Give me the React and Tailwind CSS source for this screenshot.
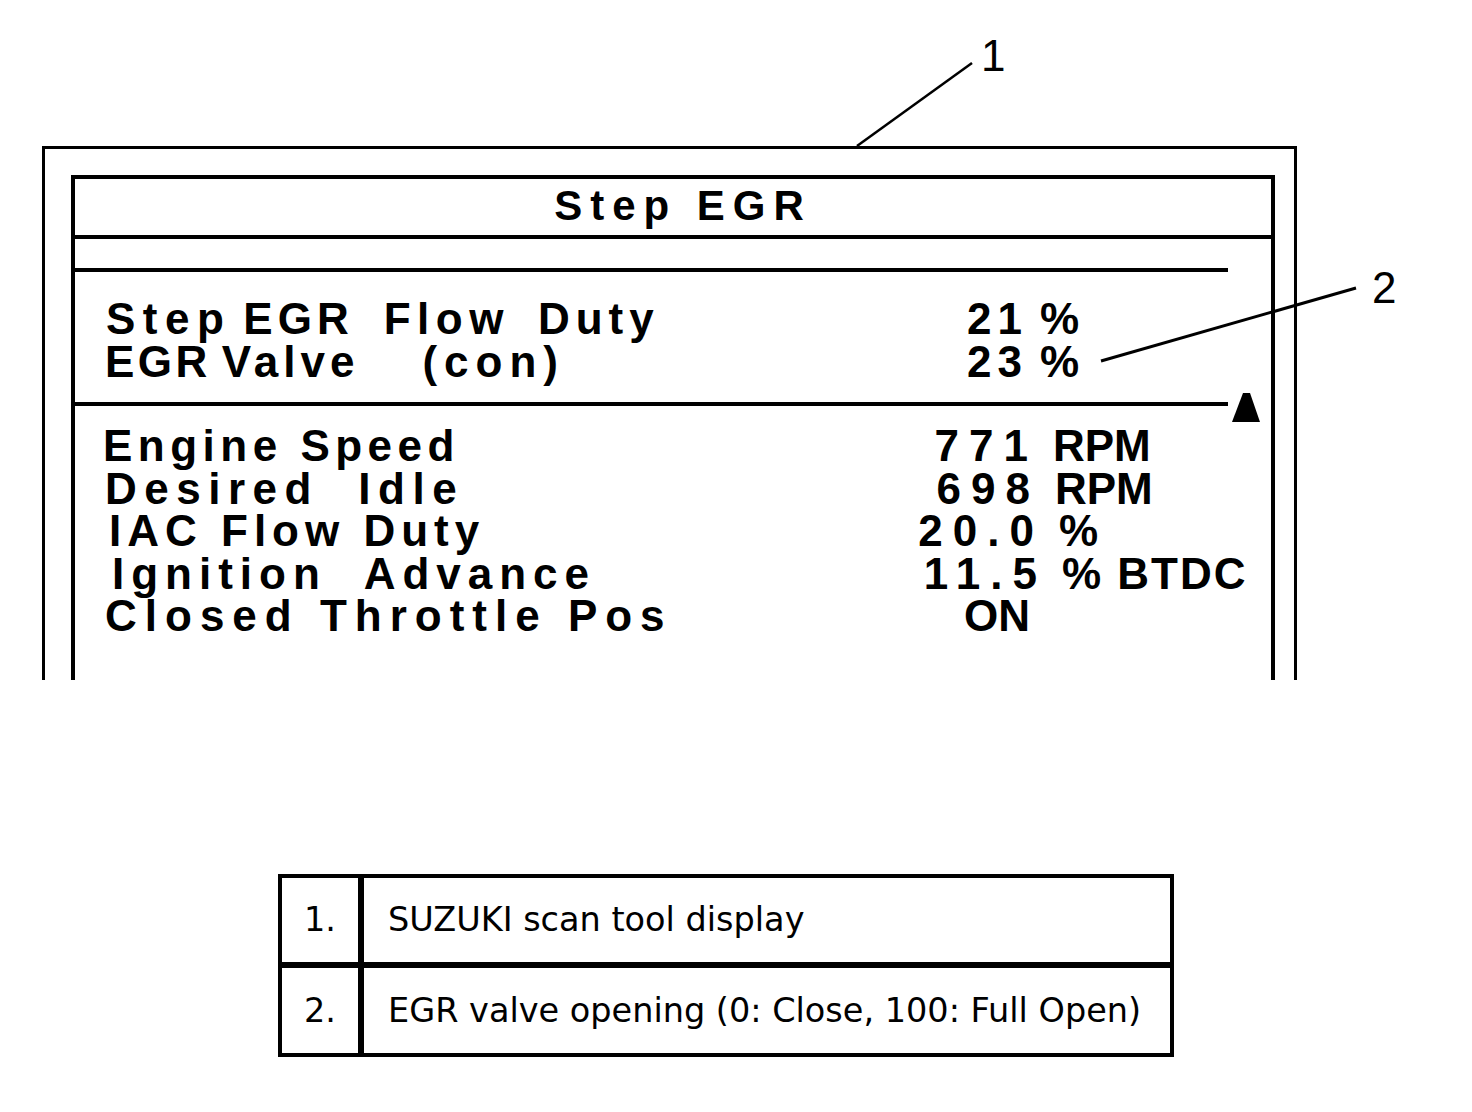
import React from "react";

function Row({ label, num, unit, lcls, ncls, ucls, top }) {
  return (
    <div className="flex whitespace-pre">
      <div className={`shrink-0 w-[795px] flex ${lcls}`}>{label}</div>
      <div className={`shrink-0 text-right ${top ? "w-[128px]" : "w-[140px]"} ${ncls}`}>{num}</div>
      <div className={`${top ? "ml-[12px]" : "ml-[15px]"} ${ucls}`}>{unit}</div>
    </div>
  );
}

export default function App() {
  return (
    <div className="relative w-[1472px] h-[1112px] bg-white overflow-hidden font-['Liberation_Sans',Arial,sans-serif] text-black">
      <div className="flex flex-col">
        <div className="ml-[42px] mt-[146px] w-[1255px] h-[534px] border-[3px] border-b-0 border-black pt-[26px] pl-[26px] pr-[19px] flex flex-col">
          <div className="flex-1 border-[4px] border-b-0 border-black flex flex-col">
            <div className="h-[60px] shrink-0 border-b-[4px] border-black flex items-center justify-center pl-[20px] pb-[3px]">
              <span className="text-[42px] leading-[42px] font-bold tracking-[8px]">Step EGR</span>
            </div>
            <div className="mt-[29px] h-[4px] w-[1153px] bg-black shrink-0" />
            <div className="mt-[25px] pl-[30px] font-bold text-[44px] leading-[43px]">
              <Row
                top
                label={
                  <>
                    <span className="ml-[1px] tracking-[7.5px]">Step</span>
                    <span className="ml-[12px] tracking-[5px]">EGR</span>
                    <span className="ml-[30px] tracking-[6.5px]">Flow</span>
                    <span className="ml-[28px] tracking-[6px]">Duty</span>
                  </>
                }
                lcls=""
                num="21"
                ncls="tracking-[6px]"
                unit="%"
                ucls=""
              />
              <Row
                top
                label={
                  <>
                    <span className="tracking-[3.5px]">EGR</span>
                    <span className="ml-[11px] tracking-[5px]">Valve</span>
                    <span className="ml-[63px] tracking-[7px]">(con)</span>
                  </>
                }
                lcls=""
                num="23"
                ncls="tracking-[6px]"
                unit="%"
                ucls=""
              />
            </div>
            <div className="mt-[10px] h-[29px] flex items-start shrink-0">
              <div className="mt-[9px] h-[4px] w-[1153px] bg-black" />
              <svg className="ml-[4px]" width="28" height="29" viewBox="0 0 28 29">
                <polygon points="11,0 18,0 28,29 0,29" fill="#000" />
              </svg>
            </div>
            <div className="mt-[3px] pl-[30px] font-bold text-[44px] leading-[42.5px]">
              <Row label="Engine Speed" lcls="tracking-[5.5px] -ml-[2px]" num="771" ncls="tracking-[10px]" unit="RPM" ucls="" />
              <Row label="Desired  Idle" lcls="tracking-[7.5px]" num="698" ncls="tracking-[10px]" unit="RPM" ucls="" />
              <Row label="IAC Flow Duty" lcls="tracking-[6px] ml-[4px]" num="20.0" ncls="tracking-[10px]" unit="%" ucls="ml-[7px]" />
              <Row label="Ignition  Advance" lcls="tracking-[7px] ml-[7px]" num="11.5" ncls="tracking-[10px]" unit="% BTDC" ucls="ml-[7px] tracking-[2px]" />
              <Row label="Closed Throttle Pos" lcls="tracking-[8px]" num="ON" ncls="pr-[10px]" unit="" ucls="" />
            </div>
          </div>
        </div>

        <div className="ml-[278px] mt-[194px] w-[896px] border-[4px] border-black font-['DejaVu_Sans',Verdana,sans-serif] text-[33.5px] leading-none">
          <div className="flex h-[90px] border-b-[6px] border-black">
            <div className="w-[82px] shrink-0 border-r-[6px] border-black flex items-center justify-center">1.</div>
            <div className="flex items-center pl-[24px]">SUZUKI scan tool display</div>
          </div>
          <div className="flex h-[85px]">
            <div className="w-[82px] shrink-0 border-r-[6px] border-black flex items-center justify-center">2.</div>
            <div className="flex items-center pl-[24px] whitespace-nowrap">EGR valve opening (0: Close, 100: Full Open)</div>
          </div>
        </div>
      </div>

      <svg className="absolute inset-0 pointer-events-none" width="1472" height="1112" viewBox="0 0 1472 1112">
        <line x1="857" y1="146" x2="972" y2="63" stroke="#000" strokeWidth="2.5" />
        <line x1="1101" y1="361" x2="1356" y2="288" stroke="#000" strokeWidth="3" />
      </svg>
      <span className="absolute left-[981px] top-[34px] text-[44px] leading-[44px]">1</span>
      <span className="absolute left-[1372px] top-[266px] text-[44px] leading-[44px]">2</span>
    </div>
  );
}
